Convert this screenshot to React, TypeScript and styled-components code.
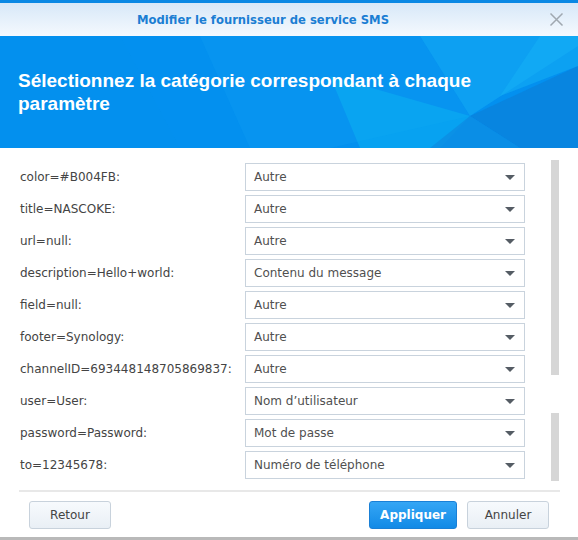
import React from 'react';
import styled, { createGlobalStyle } from 'styled-components';

const GlobalStyle = createGlobalStyle`
  html, body {
    margin: 0;
    padding: 0;
    background: #b9b9b9;
  }
  body {
    font-family: "DejaVu Sans", Verdana, sans-serif;
  }
`;

const Dialog = styled.div`
  width: 578px;
  height: 537px;
  background: #fff;
  display: flex;
  flex-direction: column;
  border-top: 3px solid #0a88e4;
  box-sizing: border-box;
  overflow: hidden;
`;

const TitleBar = styled.div`
  height: 33px;
  flex-shrink: 0;
  display: flex;
  align-items: center;
  justify-content: center;
  padding-right: 52px;
  position: relative;
  background: linear-gradient(180deg, #d7e8f8 0%, #f5f9fe 100%);
`;

const Title = styled.div`
  font-size: 11.6px;
  font-weight: bold;
  color: #1b7ed3;
`;

const CloseButton = styled.button`
  position: absolute;
  right: 14px;
  top: 9px;
  width: 15px;
  height: 15px;
  padding: 0;
  border: none;
  background: none;
  cursor: pointer;
  display: flex;
`;

const Banner = styled.div`
  height: 112px;
  flex-shrink: 0;
  position: relative;
  background: #0390ef;
  display: flex;
  align-items: center;
  padding: 0 18px;
  overflow: hidden;
`;

const BannerArt = styled.svg`
  position: absolute;
  inset: 0;
  width: 100%;
  height: 100%;
`;

const Heading = styled.h1`
  position: relative;
  margin: 0;
  max-width: 470px;
  font-family: "Liberation Sans", Arial, sans-serif;
  font-size: 19px;
  line-height: 23px;
  font-weight: bold;
  color: #fff;
`;

const Body = styled.div`
  flex: 1;
  display: flex;
  padding: 15px 19px 0 20px;
  min-height: 0;
`;

const Rows = styled.div`
  flex: 1;
  display: flex;
  flex-direction: column;
  gap: 4px;
`;

const Row = styled.div`
  display: grid;
  grid-template-columns: 225px 280px;
  align-items: center;
  height: 28px;
`;

const Label = styled.span`
  font-size: 12px;
  color: #444;
  white-space: nowrap;
`;

const Select = styled.div`
  height: 28px;
  box-sizing: border-box;
  border: 1px solid #c9d3dd;
  background: #fff;
  display: flex;
  align-items: center;
  justify-content: space-between;
  padding: 0 9px 0 8px;
  font-size: 12px;
  color: #505050;
`;

const Caret = styled.span`
  width: 0;
  height: 0;
  border-left: 5px solid transparent;
  border-right: 5px solid transparent;
  border-top: 5px solid #555c64;
`;

const ScrollTrack = styled.div`
  width: 8px;
  margin-left: 26px;
  display: flex;
  flex-direction: column;
`;

const Thumb = styled.div<{ $top: number; $height: number }>`
  margin-top: ${p => p.$top}px;
  height: ${p => p.$height}px;
  background: #d6d6d6;
`;

const Divider = styled.div`
  height: 2px;
  margin: 0 18px 0 19px;
  background: #e8e8e8;
  flex-shrink: 0;
`;

const Footer = styled.div`
  height: 44px;
  flex-shrink: 0;
  display: flex;
  align-items: center;
  padding: 1px 29px 0;
  gap: 10px;
`;

const Spacer = styled.div`
  flex: 1;
`;

const Button = styled.button<{ $primary?: boolean }>`
  height: 28px;
  min-width: 82px;
  padding: 0 10px;
  border-radius: 3px;
  font-family: inherit;
  font-size: 12px;
  cursor: pointer;
  border: 1px solid ${p => (p.$primary ? '#1a80d6' : '#c8d2dc')};
  background: ${p =>
    p.$primary
      ? 'linear-gradient(180deg, #35a6f5 0%, #128ae6 100%)'
      : 'linear-gradient(180deg, #f7fafd 0%, #e9eff5 100%)'};
  color: ${p => (p.$primary ? '#fff' : '#444')};
  font-weight: ${p => (p.$primary ? 'bold' : 'normal')};
`;

const params: [string, string][] = [
  ['color=#B004FB:', 'Autre'],
  ['title=NASCOKE:', 'Autre'],
  ['url=null:', 'Autre'],
  ['description=Hello+world:', 'Contenu du message'],
  ['field=null:', 'Autre'],
  ['footer=Synology:', 'Autre'],
  ['channelID=693448148705869837:', 'Autre'],
  ['user=User:', 'Nom d’utilisateur'],
  ['password=Password:', 'Mot de passe'],
  ['to=12345678:', 'Numéro de téléphone'],
];

export default function App() {
  return (
    <>
      <GlobalStyle />
      <Dialog>
        <TitleBar>
          <Title>Modifier le fournisseur de service SMS</Title>
          <CloseButton aria-label="Fermer">
            <svg width="15" height="15" viewBox="0 0 15 15">
              <path d="M1.5 1.5 L13.5 13.5 M13.5 1.5 L1.5 13.5" stroke="#a0a8b0" strokeWidth="1.5" fill="none" />
            </svg>
          </CloseButton>
        </TitleBar>
        <Banner>
          <BannerArt viewBox="0 0 578 112" preserveAspectRatio="none">
            <polygon points="200,0 420,0 470,80 330,112 250,112" fill="#0a98f0" opacity="0.6" />
            <polygon points="330,40 470,80 440,112 360,112" fill="#0bb0f2" opacity="0.55" />
            <polygon points="420,0 578,0 578,10 470,80" fill="#12a6f3" opacity="0.7" />
            <polygon points="470,80 578,30 578,112 520,112" fill="#0a82dc" opacity="0.8" />
            <polygon points="430,112 470,80 520,112" fill="#0c8de3" opacity="0.8" />
            <polygon points="540,0 578,0 578,30 500,60" fill="#16b2f6" opacity="0.5" />
            <polygon points="0,0 120,0 180,112 0,112" fill="#0590ee" opacity="0.4" />
          </BannerArt>
          <Heading>Sélectionnez la catégorie correspondant à chaque paramètre</Heading>
        </Banner>
        <Body>
          <Rows>
            {params.map(([label, value]) => (
              <Row key={label}>
                <Label>{label}</Label>
                <Select>
                  {value}
                  <Caret />
                </Select>
              </Row>
            ))}
          </Rows>
          <ScrollTrack>
            <Thumb $top={-3} $height={215} />
            <Thumb $top={38} $height={68} />
          </ScrollTrack>
        </Body>
        <Divider />
        <Footer>
          <Button>Retour</Button>
          <Spacer />
          <Button $primary>Appliquer</Button>
          <Button>Annuler</Button>
        </Footer>
      </Dialog>
    </>
  );
}
